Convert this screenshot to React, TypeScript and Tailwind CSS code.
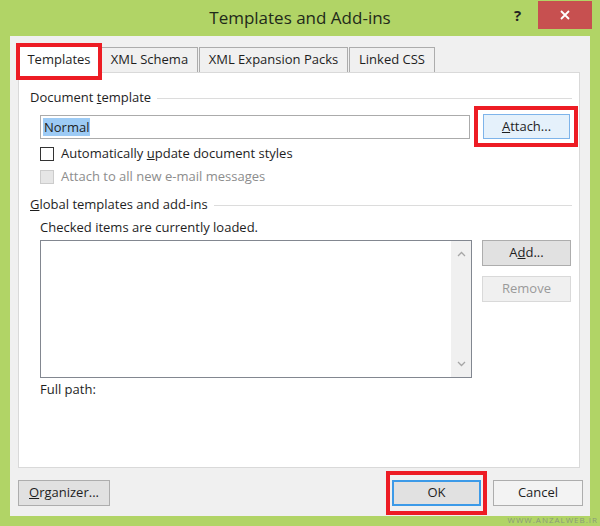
import React from "react";

const font = { fontFamily: '"Open Sans", "Noto Sans", "Liberation Sans", sans-serif' };

function RedBox({ className }: { className: string }) {
  return <div className={`pointer-events-none absolute border-[4px] border-[#ed1c24] ${className}`} />;
}

export default function App() {
  return (
    <div
      className="relative flex h-[526px] w-[600px] flex-col overflow-hidden bg-[#b1d466] text-[13px] text-[#1e1e1e]"
      style={font}
    >
      {/* Title bar */}
      <div className="relative flex h-[36px] shrink-0 items-center justify-center">
        <span className="text-[17px] text-[#1f2a1a]">Templates and Add-ins</span>
        <span className="absolute left-[514px] top-[4px] text-[15px] font-bold text-[#222]">?</span>
        <div className="absolute left-[538px] top-[1px] flex h-[28px] w-[54px] items-center justify-center bg-[#c75050]">
          <svg width="12" height="12" viewBox="0 0 12 12">
            <path d="M2 2 L10 10 M10 2 L2 10" stroke="#fff" strokeWidth="1.8" />
          </svg>
        </div>
      </div>

      {/* Body */}
      <div className="ml-[10px] flex h-[480px] w-[580px] flex-col bg-[#f0f0f0] pl-[8px] pt-[9px]">
        {/* Tabs */}
        <div className="relative z-10 flex h-[27px] items-end">
          <div className="relative -ml-[1px] flex h-[28px] w-[84px] items-center justify-center border border-b-0 border-[#d9d9d9] bg-white -mb-[1px]">
            Templates
            <RedBox className="-left-[2px] -top-[3px] h-[37px] w-[86px]" />
          </div>
          <div className="flex h-[25px] w-[97px] items-center justify-center border border-b-0 border-[#acacac] bg-[#f0f0f0]">
            XML Schema
          </div>
          <div className="ml-[1px] flex h-[25px] w-[149px] items-center justify-center border border-b-0 border-[#acacac] bg-[#f0f0f0]">
            XML Expansion Packs
          </div>
          <div className="ml-[1px] flex h-[25px] w-[86px] items-center justify-center border border-b-0 border-[#acacac] bg-[#f0f0f0]">
            Linked CSS
          </div>
        </div>

        {/* Panel */}
        <div className="flex h-[396px] w-[562px] flex-col border border-[#d9d9d9] bg-white pl-[11px] pr-[7px]">
          <div className="mt-[16px] flex h-[18px] items-center gap-[6px]">
            <span>
              Document <span className="underline">t</span>emplate
            </span>
            <div className="h-px flex-1 bg-[#dcdcdc]" />
          </div>

          <div className="ml-[10px] mt-[7px] flex h-[25px] items-center">
            <div className="flex h-[24px] w-[430px] items-center border border-[#ababab] bg-white px-[2px]">
              <span className="bg-[#9dcbf5] px-[1px] leading-[18px]">Normal</span>
            </div>
            <div className="relative ml-[13px]">
              <div className="flex h-[25px] w-[87px] items-center justify-center border border-[#7eb4ea] bg-[#e5f1fb]">
                <span>
                  <span className="underline">A</span>ttach...
                </span>
              </div>
              <RedBox className="-left-[9px] -top-[8px] h-[41px] w-[104px]" />
            </div>
          </div>

          <div className="ml-[10px] mt-[5px] flex h-[20px] items-center gap-[7px]">
            <div className="h-[14px] w-[14px] border border-[#333] bg-white" />
            <span>
              Automatically <span className="underline">u</span>pdate document styles
            </span>
          </div>
          <div className="ml-[10px] mt-[3px] flex h-[20px] items-center gap-[7px]">
            <div className="h-[14px] w-[14px] border border-[#cccccc] bg-[#e6e6e6]" />
            <span className="text-[#8d8d8d]">Attach to all new e-mail messages</span>
          </div>

          <div className="mt-[9px] flex h-[18px] items-center gap-[6px]">
            <span>
              <span className="underline">G</span>lobal templates and add-ins
            </span>
            <div className="h-px flex-1 bg-[#dcdcdc]" />
          </div>

          <div className="ml-[10px] mt-[5px] flex h-[18px] items-center">Checked items are currently loaded.</div>

          <div className="ml-[10px] mt-[3px] flex">
            <div className="flex h-[138px] w-[432px] border border-[#828790] bg-white">
              <div className="flex-1" />
              <div className="flex w-[20px] flex-col items-center justify-between bg-[#f0f0f0] py-[10px]">
                <svg width="9" height="6" viewBox="0 0 9 6">
                  <path d="M1 5 L4.5 1.5 L8 5" fill="none" stroke="#a6a6a6" strokeWidth="1.3" />
                </svg>
                <svg width="9" height="6" viewBox="0 0 9 6">
                  <path d="M1 1 L4.5 4.5 L8 1" fill="none" stroke="#a6a6a6" strokeWidth="1.3" />
                </svg>
              </div>
            </div>
            <div className="ml-[10px] flex flex-col gap-[10px]">
              <div className="flex h-[26px] w-[89px] items-center justify-center border border-[#adadad] bg-[#e1e1e1]">
                <span>
                  A<span className="underline">d</span>d...
                </span>
              </div>
              <div className="flex h-[26px] w-[89px] items-center justify-center border border-[#d9d9d9] bg-[#f0f0f0] text-[#9a9a9a]">
                Remove
              </div>
            </div>
          </div>

          <div className="ml-[10px] mt-[3px] flex h-[18px] items-center">Full path:</div>
        </div>

        {/* Bottom buttons */}
        <div className="mt-[12px] flex h-[26px] items-center">
          <div className="flex h-[26px] w-[92px] items-center justify-center border border-[#adadad] bg-[#e1e1e1]">
            <span>
              <span className="underline">O</span>rganizer...
            </span>
          </div>
          <div className="relative ml-[282px]">
            <div className="flex h-[26px] w-[89px] items-center justify-center border-2 border-[#3c9ae8] bg-[#e1e1e1]">
              OK
            </div>
            <RedBox className="-left-[6px] -top-[9px] h-[44px] w-[101px]" />
          </div>
          <div className="ml-[12px] flex h-[26px] w-[90px] items-center justify-center border border-[#adadad] bg-[#f3f3f3]">
            Cancel
          </div>
        </div>
      </div>

      <span className="absolute bottom-[0px] right-[2px] text-[8px] tracking-[1px] text-[#8a9a7a]">WWW.ANZALWEB.IR</span>
    </div>
  );
}
